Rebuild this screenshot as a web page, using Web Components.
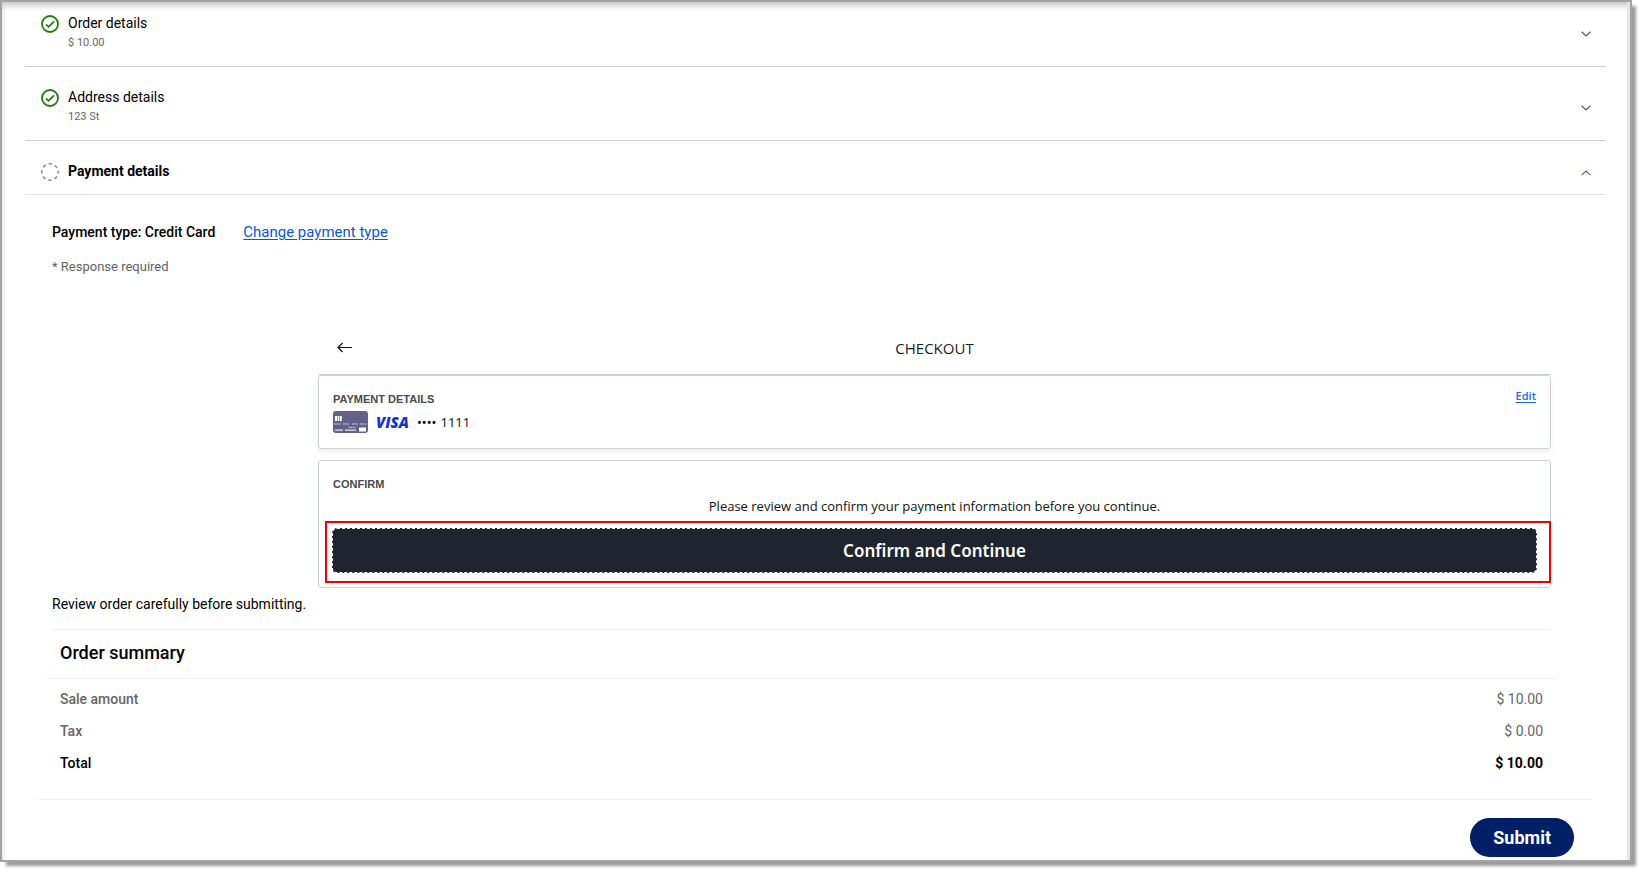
<!DOCTYPE html>
<html lang="en">
<head>
<meta charset="utf-8">
<title>Payment details</title>
<style>
  body {
    margin: 0;
    background: #fff;
    color: #000;
    font-family: Roboto, "Liberation Sans", sans-serif;
    font-size: 14px;
    line-height: 20px;
  }
</style>
</head>
<body>
<window-frame>
  <accordion-row label="Order details" note="$ 10.00" state="done" class="first"></accordion-row>
  <accordion-row label="Address details" note="123 St" state="done"></accordion-row>
  <accordion-row label="Payment details" state="open">
    <payment-type value="Credit Card"></payment-type>
    <checkout-panel>
      <checkout-card label="Payment details" raised>
        <saved-card digits="1111"></saved-card>
        <edit-link slot="action"></edit-link>
      </checkout-card>
      <checkout-card label="Confirm">
        <confirm-action label="Confirm and Continue">Please review and confirm your payment information before you continue.</confirm-action>
      </checkout-card>
    </checkout-panel>
    <order-summary sale="$ 10.00" tax="$ 0.00" total="$ 10.00">Review order carefully before submitting.</order-summary>
  </accordion-row>
  <submit-bar>Submit</submit-bar>
</window-frame>

<script>
class WindowFrame extends HTMLElement {
  constructor() {
    super();
    this.shadow = this.attachShadow({ mode: 'open' });
    this.shadow.innerHTML = `
      <style>
        :host {
          display: block;
          padding: 0 12px 12px 0;
        }

        main {
          background: #fff;
          border: 2px solid #a3a3a3;
          box-shadow: inset -3px 0 #e6e6e6, inset 0 4px 6px -1px rgba(0, 0, 0, 0.25), 5px 5px 3px -1px rgba(0, 0, 0, 0.4);
          padding: 0 24px 3px 23px;
        }
      </style>
      <main><slot></slot></main>
    `;
  }
}

class AccordionRow extends HTMLElement {
  constructor() {
    super();
    const open = this.getAttribute('state') === 'open';
    const note = this.getAttribute('note');
    this.shadow = this.attachShadow({ mode: 'open' });
    this.shadow.innerHTML = `
      <style>
        :host {
          display: block;
        }

        h2 {
          font: inherit;
          margin: 0;
        }

        button {
          align-items: center;
          background: none;
          border: 0;
          border-bottom: 1px solid #d0d0d0;
          color: inherit;
          cursor: pointer;
          display: flex;
          font: inherit;
          gap: 9px;
          padding: 20px 15px 14px 16px;
          text-align: left;
          width: 100%;
        }

        :host(.first) button {
          padding-top: 11px;
        }

        button.open {
          border-color: #dfdfe8;
          padding-bottom: 13px;
        }

        .icon {
          align-self: flex-start;
          flex: none;
          margin-top: 2px;
        }

        .chevron {
          flex: none;
          margin-top: 3px;
        }

        .text {
          flex: 1;
        }

        .label,
        .note {
          display: block;
        }

        .open .label {
          font-weight: 700;
        }

        .note {
          color: #666;
          font-size: 11px;
          line-height: 19px;
        }

        .body {
          padding: 0 55px 0 27px;
        }
      </style>
      <h2>
        <button type="button" class="${open ? 'open' : ''}" aria-expanded="${open}">
          <svg class="icon" width="18" height="18" viewBox="0 0 18 18" fill="none" aria-hidden="true">
            ${open
              ? '<circle cx="9" cy="9" r="8.2" stroke="#8a8a8a" stroke-width="1.5" stroke-dasharray="3.4 3.04" stroke-dashoffset="1.7"/>'
              : '<circle cx="9" cy="9" r="8" stroke="#1e7b0c" stroke-width="1.8"/><path d="M5 9.4l2.6 2.4 5.4-5.4" stroke="#1e7b0c" stroke-width="1.8"/>'}
          </svg>
          <span class="text">
            <span class="label">${this.getAttribute('label')}</span>
            ${note ? `<span class="note">${note}</span>` : ''}
          </span>
          <svg class="chevron" width="10" height="6" viewBox="0 0 10 6" fill="none" aria-hidden="true">
            ${open
              ? '<path d="M.6 5.2L5 1l4.4 4.2" stroke="#4c6490" stroke-width="1.1"/>'
              : '<path d="M.6.8L5 5 9.4.8" stroke="#555" stroke-width="1.2"/>'}
          </svg>
        </button>
      </h2>
      ${open ? '<div class="body"><slot></slot></div>' : ''}
    `;
  }
}

class PaymentType extends HTMLElement {
  constructor() {
    super();
    this.shadow = this.attachShadow({ mode: 'open' });
    this.shadow.innerHTML = `
      <style>
        :host {
          display: block;
          padding-top: 27px;
        }

        .type {
          display: flex;
          gap: 28px;
        }

        strong {
          font-weight: 500;
        }

        a {
          color: #0b57d0;
          font-size: 15px;
          text-decoration: underline;
          text-underline-offset: 2px;
        }

        p {
          color: #636363;
          font-size: 13px;
          margin: 15px 0 0;
        }
      </style>
      <div class="type">
        <strong>Payment type: ${this.getAttribute('value')}</strong>
        <a href="#change">Change payment type</a>
      </div>
      <p>* Response required</p>
    `;
  }
}

class CheckoutPanel extends HTMLElement {
  constructor() {
    super();
    this.shadow = this.attachShadow({ mode: 'open' });
    this.shadow.innerHTML = `
      <style>
        :host {
          display: block;
          font-family: "Open Sans", "Noto Sans", sans-serif;
          margin: 57px 0 0 266px;
        }

        header {
          align-items: center;
          border-bottom: 1px solid #cdd2d8;
          display: grid;
          grid-template-columns: 1fr auto 1fr;
          padding: 4px 19px 16px;
        }

        button {
          background: none;
          border: 0;
          cursor: pointer;
          display: flex;
          justify-self: start;
          padding: 0;
        }

        h3 {
          color: #1c1c1c;
          font-size: 15px;
          font-weight: 400;
          margin: 0;
        }

        .cards {
          display: grid;
          gap: 11px;
        }
      </style>
      <header>
        <button type="button" aria-label="Back">
          <svg width="16" height="12" viewBox="0 0 16 12" fill="none" stroke="#111" stroke-width="1.2">
            <path d="M15 5.5H1M5.6 1L1 5.5 5.6 10"/>
          </svg>
        </button>
        <h3>CHECKOUT</h3>
      </header>
      <div class="cards"><slot></slot></div>
    `;
  }
}

class CheckoutCard extends HTMLElement {
  constructor() {
    super();
    this.shadow = this.attachShadow({ mode: 'open' });
    this.shadow.innerHTML = `
      <style>
        :host {
          border: 1px solid #cdd2d8;
          border-radius: 3px;
          display: block;
          padding: 13px 14px;
        }

        :host([raised]) {
          box-shadow: 0 3px 5px rgba(0, 0, 0, 0.07);
        }

        header {
          display: flex;
          justify-content: space-between;
        }

        h4 {
          color: #4a4a4a;
          font-family: "Liberation Sans", sans-serif;
          font-size: 11px;
          font-weight: 700;
          line-height: 20px;
          margin: 0;
          text-transform: uppercase;
        }
      </style>
      <header>
        <h4>${this.getAttribute('label')}</h4>
        <slot name="action"></slot>
      </header>
      <slot></slot>
    `;
  }
}

class EditLink extends HTMLElement {
  constructor() {
    super();
    this.shadow = this.attachShadow({ mode: 'open' });
    this.shadow.innerHTML = `
      <style>
        :host {
          display: block;
        }

        a {
          color: #1668e8;
          display: block;
          font-size: 11px;
          font-weight: 600;
          line-height: 14px;
          text-underline-offset: 2px;
        }
      </style>
      <a href="#edit">Edit</a>
    `;
  }
}

class SavedCard extends HTMLElement {
  constructor() {
    super();
    this.shadow = this.attachShadow({ mode: 'open' });
    this.shadow.innerHTML = `
      <style>
        :host {
          align-items: center;
          display: flex;
          font-family: "Noto Sans", "Open Sans", sans-serif;
          font-size: 13px;
          gap: 8px;
          line-height: 24px;
          padding: 1px 0;
        }

        svg {
          flex: none;
        }

        .brand {
          color: #1434cb;
          font-family: "Open Sans", sans-serif;
          font-size: 15px;
          font-style: italic;
          font-weight: 800;
        }

        .number {
          align-items: center;
          color: #222;
          display: flex;
          gap: 4px;
        }

        .dots {
          color: #000;
        }
      </style>
      <svg width="35" height="22" viewBox="0 0 35 22" aria-hidden="true">
        <rect width="35" height="22" rx="3" fill="#63618a"/>
        <path d="M2 5h2v5H2zM4.600 5h1.800v5H4.600zM7 5h1.800v5H7z" fill="#fff"/>
        <path d="M1 13h7M10 13h6M19 13h6M27 13h7" stroke="#a9a8c2" stroke-width="1.400" stroke-dasharray="1.800 .5"/>
        <path d="M15.500 16.400h7" stroke="#d8d7e4" stroke-dasharray="1.600 .5"/>
        <path d="M2 19.200h8M12 19.200h11" stroke="#e4e3ee" stroke-width="1.200"/>
        <rect x="26" y="16.500" width="7" height="4" fill="#fff"/>
      </svg>
      <span class="brand">VISA</span>
      <span class="number"><span class="dots">••••</span><span>${this.getAttribute('digits')}</span></span>
    `;
  }
}

class ConfirmAction extends HTMLElement {
  constructor() {
    super();
    this.shadow = this.attachShadow({ mode: 'open' });
    this.shadow.innerHTML = `
      <style>
        :host {
          display: block;
        }

        p {
          color: #111;
          font-size: 13px;
          margin: 2px 0 5px;
          text-align: center;
        }

        /* the outline runs over the card's right border */
        .highlight {
          border: 2px solid #f00000;
          margin: 0 -15px -9px -8px;
          padding: 5px 12px 8px 5px;
        }

        button {
          background: #20242f;
          border: 1px dashed #fff;
          border-radius: 5px;
          color: #fff;
          cursor: pointer;
          display: block;
          font: 600 17px/43px "Noto Sans", "Open Sans", sans-serif;
          padding: 0;
          width: 100%;
        }
      </style>
      <p><slot></slot></p>
      <div class="highlight"><button type="button">${this.getAttribute('label')}</button></div>
    `;
  }
}

class OrderSummary extends HTMLElement {
  constructor() {
    super();
    this.shadow = this.attachShadow({ mode: 'open' });
    this.shadow.innerHTML = `
      <style>
        :host {
          display: block;
        }

        p {
          border-bottom: 1px solid #f2f2f2;
          margin: 0;
          padding: 6px 0 15px;
        }

        h3 {
          border-bottom: 1px solid #f2f2f2;
          font-size: 18px;
          font-weight: 500;
          line-height: 24px;
          margin: 0 -6px;
          padding: 11px 14px 13px;
        }

        table {
          border-collapse: collapse;
          margin-top: 4px;
          width: 100%;
        }

        th,
        td {
          color: #666;
          padding: 6px 8px;
        }

        th {
          font-weight: 500;
          text-align: left;
        }

        td {
          text-align: right;
        }

        .total th,
        .total td {
          color: #000;
        }

        .total td {
          font-weight: 700;
        }
      </style>
      <p><slot></slot></p>
      <h3>Order summary</h3>
      <table>
        <tr><th scope="row">Sale amount</th><td>${this.getAttribute('sale')}</td></tr>
        <tr><th scope="row">Tax</th><td>${this.getAttribute('tax')}</td></tr>
        <tr class="total"><th scope="row">Total</th><td>${this.getAttribute('total')}</td></tr>
      </table>
    `;
  }
}

class SubmitBar extends HTMLElement {
  constructor() {
    super();
    this.shadow = this.attachShadow({ mode: 'open' });
    this.shadow.innerHTML = `
      <style>
        :host {
          border-top: 1px solid #f2f2f2;
          display: flex;
          justify-content: flex-end;
          margin: 20px 14px 0 13px;
          padding: 18px 18px 0 0;
        }

        button {
          background: #001f66;
          border: 0;
          border-radius: 20px;
          color: #fff;
          cursor: pointer;
          font: 700 18px/23px Roboto, sans-serif;
          padding: 8px 23px;
        }
      </style>
      <button type="submit"><slot></slot></button>
    `;
  }
}

customElements.define('window-frame', WindowFrame);
customElements.define('accordion-row', AccordionRow);
customElements.define('payment-type', PaymentType);
customElements.define('checkout-panel', CheckoutPanel);
customElements.define('checkout-card', CheckoutCard);
customElements.define('edit-link', EditLink);
customElements.define('saved-card', SavedCard);
customElements.define('confirm-action', ConfirmAction);
customElements.define('order-summary', OrderSummary);
customElements.define('submit-bar', SubmitBar);
</script>
</body>
</html>
